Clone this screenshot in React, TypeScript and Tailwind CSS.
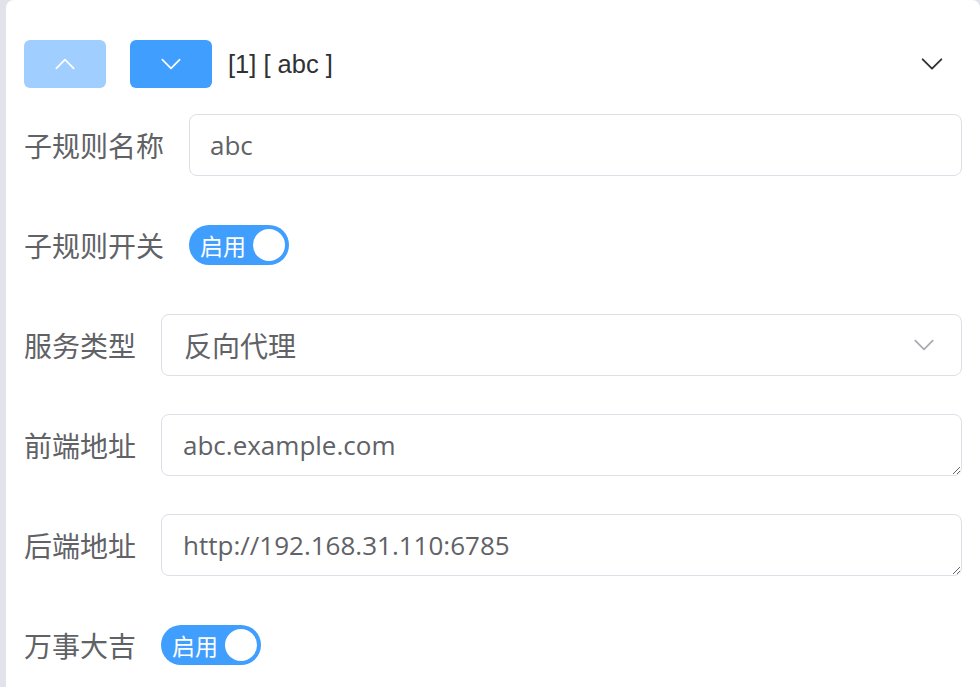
const cjk = "font-['Noto_Sans_CJK_SC','Noto_Sans',sans-serif]"
const latin = "font-['Open_Sans','Noto_Sans_CJK_SC',sans-serif]"

function Chevron({ up = false, className = "" }: { up?: boolean; className?: string }) {
  return (
    <svg viewBox="0 0 24 24" className={className} fill="none" stroke="currentColor" strokeWidth={1.6} strokeLinecap="round" strokeLinejoin="round">
      <path d={up ? "M4 16l8-8 8 8" : "M4 8l8 8 8-8"} />
    </svg>
  )
}

function Switch() {
  return (
    <div className="flex h-[40px] w-[100px] items-center justify-between rounded-full bg-[#409eff] pl-[11px] pr-[4px]">
      <span className={`${cjk} text-[23px] leading-none text-white`}>启用</span>
      <span className="h-[32px] w-[32px] rounded-full bg-white" />
    </div>
  )
}

function Row({ label, children }: { label: string; children: React.ReactNode }) {
  return (
    <div className="mb-[38px] flex h-[62px] items-center">
      <div className={`${cjk} shrink-0 pr-[25px] text-[28px] leading-none text-[#606266]`}>{label}</div>
      <div className="flex min-w-0 flex-1 items-center">{children}</div>
    </div>
  )
}

function TextBox({ value }: { value: string }) {
  return (
    <textarea
      readOnly
      rows={1}
      defaultValue={value}
      className={`${latin} block h-[62px] w-full resize-y overflow-hidden rounded-[8px] border border-[#dcdfe6] bg-white px-[21px] py-[13px] text-[26px] leading-[34px] text-[#606266] outline-none`}
    />
  )
}

export default function App() {
  return (
    <div className="min-h-[687px] bg-[#e0e3ea] pl-[6px]">
      <div className="min-h-[687px] rounded-t-[8px] bg-white px-[18px] pt-[40px]">
        {/* header */}
        <div className="mb-[26px] flex h-[48px] items-center">
          <button className="flex h-[48px] w-[82px] items-center justify-center rounded-[6px] bg-[#a0cfff] text-white">
            <Chevron up className="h-[26px] w-[26px]" />
          </button>
          <button className="ml-[24px] flex h-[48px] w-[82px] items-center justify-center rounded-[6px] bg-[#409eff] text-white">
            <Chevron className="h-[26px] w-[26px]" />
          </button>
          <span className="ml-[16px] font-['Liberation_Sans',sans-serif] text-[25.5px] text-[#303133]">[1] [ abc ]</span>
          <Chevron className="ml-auto mr-[16px] h-[28px] w-[28px] text-[#303133]" />
        </div>

        <Row label="子规则名称">
          <div className="flex h-[62px] w-full items-center rounded-[8px] border border-[#dcdfe6] px-[20px]">
            <span className={`${latin} text-[26px] text-[#606266]`}>abc</span>
          </div>
        </Row>

        <Row label="子规则开关">
          <Switch />
        </Row>

        <Row label="服务类型">
          <div className="flex h-[62px] w-full items-center justify-between rounded-[8px] border border-[#dcdfe6] pl-[22px] pr-[24px]">
            <span className={`${cjk} text-[28px] text-[#606266]`}>反向代理</span>
            <Chevron className="h-[26px] w-[26px] text-[#a8abb2]" />
          </div>
        </Row>

        <Row label="前端地址">
          <TextBox value="abc.example.com" />
        </Row>

        <Row label="后端地址">
          <TextBox value="http://192.168.31.110:6785" />
        </Row>

        <Row label="万事大吉">
          <Switch />
        </Row>
      </div>
    </div>
  )
}
